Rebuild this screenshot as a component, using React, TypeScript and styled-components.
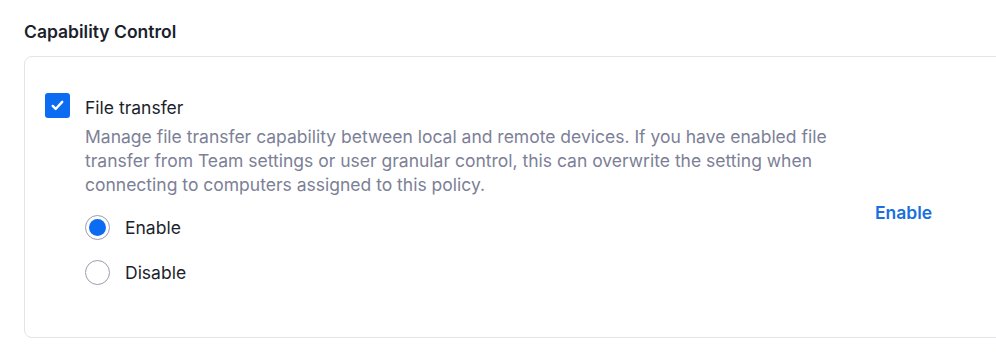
import React, { useState } from 'react';
import styled, { createGlobalStyle } from 'styled-components';

const GlobalStyle = createGlobalStyle`
  html, body {
    margin: 0;
    padding: 0;
    background: #ffffff;
    font-family: Inter, "Noto Sans", sans-serif;
    overflow: hidden;
  }
`;

const Page = styled.div`
  width: 996px;
  height: 360px;
  padding: 22px 0 0 24px;
  box-sizing: border-box;
  overflow: hidden;
`;

const Title = styled.h3`
  margin: 0 0 14px;
  font-size: 17.5px;
  line-height: 20px;
  font-weight: 600;
  color: #1c1f2e;
`;

const Card = styled.div`
  width: 1000px;
  border: 1px solid #e2e4ea;
  border-radius: 8px;
  padding: 36px 20px 52px;
  box-sizing: border-box;
  display: grid;
  grid-template-columns: 1fr 128px;
`;

const Option = styled.div`
  display: flex;
  gap: 15px;
`;

const Check = styled.span`
  width: 25px;
  height: 25px;
  flex: none;
  border-radius: 3px;
  background: #0b6cf2;
  display: flex;
  align-items: center;
  justify-content: center;
`;

const Body = styled.div`
  display: flex;
  flex-direction: column;
`;

const Label = styled.div`
  margin-top: 2px;
  font-size: 17.5px;
  line-height: 25px;
  color: #1c1f2e;
`;

const Description = styled.p`
  margin: 5px 0 0;
  width: 760px;
  font-size: 17.5px;
  line-height: 24px;
  color: #7c8097;
`;

const RadioList = styled.div`
  display: flex;
  flex-direction: column;
  gap: 20px;
  margin-top: 18px;
`;

const RadioRow = styled.label`
  display: flex;
  align-items: center;
  gap: 15px;
  font-size: 17.5px;
  line-height: 25px;
  color: #1c1f2e;
  cursor: pointer;
`;

const RadioDot = styled.span<{ $on: boolean }>`
  width: 25px;
  height: 25px;
  flex: none;
  box-sizing: border-box;
  border-radius: 50%;
  border: 1.5px solid #9a9db2;
  display: flex;
  align-items: center;
  justify-content: center;
  &::after {
    content: '';
    width: 17px;
    height: 17px;
    border-radius: 50%;
    background: ${(p) => (p.$on ? '#0b6cf2' : 'transparent')};
  }
`;

const Status = styled.div`
  align-self: center;
  margin-top: 46px;
  font-size: 17.5px;
  font-weight: 600;
  color: #1a6fe0;
`;

const options = ['Enable', 'Disable'];

const App = () => {
  const [value, setValue] = useState('Enable');
  return (
    <Page>
      <GlobalStyle />
      <Title>Capability Control</Title>
      <Card>
        <Option>
          <Check>
            <svg width="15" height="15" viewBox="0 0 14 14" fill="none">
              <path d="M2.5 7.4l2.8 2.8 6.1-6.6" stroke="#fff" strokeWidth="2.2" strokeLinecap="round" strokeLinejoin="round" />
            </svg>
          </Check>
          <Body>
            <Label>File transfer</Label>
            <Description>
              Manage file transfer capability between local and remote devices. If you have enabled file
              transfer from Team settings or user granular control, this can overwrite the setting when
              connecting to computers assigned to this policy.
            </Description>
            <RadioList>
              {options.map((o) => (
                <RadioRow key={o} onClick={() => setValue(o)}>
                  <RadioDot $on={value === o} />
                  {o}
                </RadioRow>
              ))}
            </RadioList>
          </Body>
        </Option>
        <Status>{value}</Status>
      </Card>
    </Page>
  );
};

export default App;
